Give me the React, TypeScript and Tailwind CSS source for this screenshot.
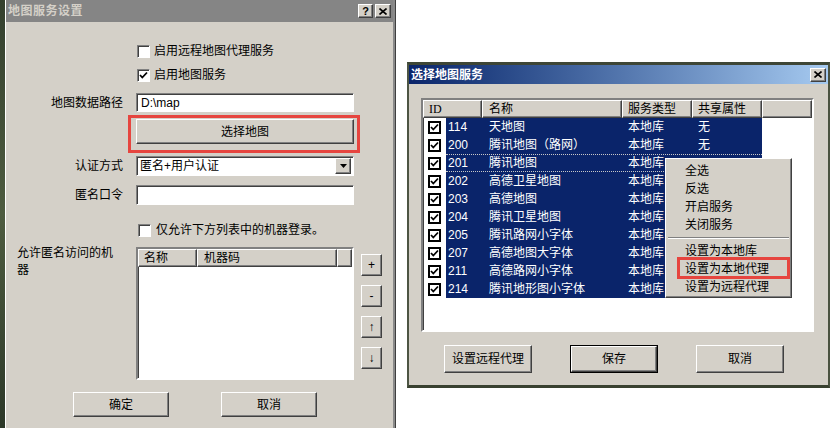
import React from "react";

// classic win2k bevels
const raised =
  "border border-t-white border-l-white border-r-[#404040] border-b-[#404040] shadow-[inset_-1px_-1px_0_#808080]";
const sunken =
  "border border-t-[#808080] border-l-[#808080] border-r-white border-b-white shadow-[inset_1px_1px_0_#404040]";

const rows = [
  ["114", "天地图", "本地库", "无"],
  ["200", "腾讯地图（路网）", "本地库", "无"],
  ["201", "腾讯地图", "本地库", ""],
  ["202", "高德卫星地图", "本地库", ""],
  ["203", "高德地图", "本地库", ""],
  ["204", "腾讯卫星地图", "本地库", ""],
  ["205", "腾讯路网小字体", "本地库", ""],
  ["207", "高德地图大字体", "本地库", ""],
  ["211", "高德路网小字体", "本地库", ""],
  ["214", "腾讯地形图小字体", "本地库", ""],
];

function Tick() {
  return (
    <svg width="9" height="9" viewBox="0 0 9 9">
      <polyline points="1,4 3.3,6.5 8,1.5" fill="none" stroke="#000" strokeWidth="1.8" />
    </svg>
  );
}

function CheckBox({ checked }: { checked?: boolean }) {
  return (
    <span className={`w-[13px] h-[13px] shrink-0 bg-white flex items-center justify-center ${sunken}`}>
      {checked && <Tick />}
    </span>
  );
}

function CloseGlyph() {
  return (
    <svg width="8" height="7" viewBox="0 0 8 7">
      <path d="M0.5 0.5 L7.5 6.5 M7.5 0.5 L0.5 6.5" stroke="#000" strokeWidth="1.6" />
    </svg>
  );
}

function Btn({ label, className = "" }: { label: string; className?: string }) {
  return (
    <div className={`bg-[#d4d0c8] flex items-center justify-center ${raised} ${className}`}>{label}</div>
  );
}

function LeftDialog() {
  return (
    <div className="w-[391px] h-full shrink-0 bg-[#d4d0c8] border-l border-l-white border-r border-r-[#404040] shadow-[inset_-2px_0_0_#8a8a8a] flex flex-col">
      {/* Title (inactive) */}
      <div className="h-[22px] mr-[2px] bg-[#858585] flex items-center pl-[2px] pr-[2px]">
        <span className="font-bold text-[#d4d0c8] tracking-[0.5px]">地图服务设置</span>
        <div className="ml-auto flex gap-[2px]">
          <div className={`w-[15px] h-[14px] bg-[#d4d0c8] flex items-center justify-center text-[11px] font-bold leading-none ${raised}`}>?</div>
          <div className={`w-[16px] h-[14px] bg-[#d4d0c8] flex items-center justify-center ${raised}`}>
            <CloseGlyph />
          </div>
        </div>
      </div>

      <div className="h-[16px] mt-[21px] pl-[131px] flex items-center gap-[4px]">
        <CheckBox />
        <span>启用远程地图代理服务</span>
      </div>
      <div className="h-[16px] mt-[8px] pl-[131px] flex items-center gap-[4px]">
        <CheckBox checked />
        <span>启用地图服务</span>
      </div>

      <div className="mt-[10px] flex items-center gap-[13px]">
        <span className="w-[117px] text-right">地图数据路径</span>
        <div className={`w-[218px] h-[19px] bg-white flex items-center pl-[4px] ${sunken}`}>D:\map</div>
      </div>

      <div className="mt-[7px] ml-[130px] relative w-[218px]">
        <Btn label="选择地图" className="w-[218px] h-[25px]" />
        <div className="absolute -top-[4px] -bottom-[9px] -left-[8px] -right-[6px] border-[3px] border-[#e6453f]" />
      </div>

      <div className="mt-[12px] flex items-center gap-[13px]">
        <span className="w-[117px] text-right">认证方式</span>
        <div className={`w-[218px] h-[20px] bg-white flex items-center pl-[3px] pr-[2px] ${sunken}`}>
          <span>匿名+用户认证</span>
          <div className={`ml-auto w-[16px] h-[16px] bg-[#d4d0c8] flex items-center justify-center ${raised}`}>
            <svg width="7" height="4" viewBox="0 0 7 4">
              <path d="M0 0 H7 L3.5 4 Z" fill="#000" />
            </svg>
          </div>
        </div>
      </div>

      <div className="mt-[9px] flex items-center gap-[13px]">
        <span className="w-[117px] text-right">匿名口令</span>
        <div className={`w-[218px] h-[20px] bg-white ${sunken}`} />
      </div>

      <div className="h-[16px] mt-[17px] pl-[132px] flex items-center gap-[5px]">
        <CheckBox />
        <span>仅允许下方列表中的机器登录。</span>
      </div>

      <div className="mt-[9px] flex">
        <div className="w-[130px] pl-[11px] -mt-[2px]">
          <div className="w-[100px] leading-[17px]">允许匿名访问的机器</div>
        </div>
        <div className={`w-[218px] h-[133px] bg-white flex flex-col ${sunken} border-[2px]`}>
          <div className="flex h-[18px] shrink-0">
            <div className={`w-[59px] bg-[#d4d0c8] pl-[5px] flex items-center ${raised}`}>名称</div>
            <div className={`w-[140px] bg-[#d4d0c8] pl-[6px] flex items-center ${raised}`}>机器码</div>
            <div className={`flex-1 bg-[#d4d0c8] ${raised}`} />
          </div>
        </div>
        <div className="ml-[7px] pt-[7px] flex flex-col gap-[9px]">
          {["+", "-", "↑", "↓"].map((s) => (
            <div key={s} className={`w-[21px] h-[22px] bg-[#d4d0c8] flex items-center justify-center text-[12px] ${raised}`}>
              {s}
            </div>
          ))}
        </div>
      </div>

      <div className="mt-[12px] pl-[67px] flex gap-[52px]">
        <Btn label="确定" className="w-[96px] h-[25px]" />
        <Btn label="取消" className="w-[96px] h-[25px]" />
      </div>
    </div>
  );
}

const menuItems = ["全选", "反选", "开启服务", "关闭服务"];
const menuItems2 = ["设置为本地库", "设置为本地代理", "设置为远程代理"];

function ContextMenu() {
  return (
    <div className={`absolute left-[242px] top-[58px] w-[127px] h-[140px] bg-[#d4d0c8] pt-[3px] ${raised}`}>
      {menuItems.map((m) => (
        <div key={m} className="h-[18px] pl-[19px] flex items-center">{m}</div>
      ))}
      <div className="h-[8px] flex items-center px-[2px]">
        <div className="w-full h-[2px] border-t border-t-[#808080] border-b border-b-white" />
      </div>
      {menuItems2.map((m, i) => (
        <div key={m} className="h-[18px] pl-[19px] flex items-center relative">
          {m}
          {i === 1 && (
            <div className="absolute -top-[3px] -bottom-[1px] left-[11px] right-[1px] border-[3px] border-[#e6453f]" />
          )}
        </div>
      ))}
    </div>
  );
}

function RightDialog() {
  return (
    <div className="w-[423px] h-[326px] border-t-[3px] border-t-[#3e4636] border-b-[3px] border-b-[#394130] border-l-2 border-l-[#4d5544] border-r-2 border-r-[#4a5240] bg-[#d4d0c8] flex flex-col">
      <div className="h-[19px] bg-gradient-to-r from-[#0a246a] to-[#a6caf0] flex items-center pl-[2px] pr-[2px]">
        <span className="font-bold text-white">选择地图服务</span>
        <div className={`ml-auto w-[16px] h-[14px] bg-[#d4d0c8] flex items-center justify-center ${raised}`}>
          <CloseGlyph />
        </div>
      </div>

      <div className={`relative mt-[14px] ml-[12px] w-[393px] h-[234px] bg-white flex flex-col border-[2px] ${sunken}`}>
        <div className="flex h-[18px] shrink-0">
          <div className={`w-[59px] bg-[#d4d0c8] pl-[5px] flex items-center [font-family:'Liberation_Serif',serif] ${raised}`}>ID</div>
          <div className={`w-[140px] bg-[#d4d0c8] pl-[6px] flex items-center ${raised}`}>名称</div>
          <div className={`w-[70px] bg-[#d4d0c8] pl-[5px] flex items-center ${raised}`}>服务类型</div>
          <div className={`w-[70px] bg-[#d4d0c8] pl-[5px] flex items-center ${raised}`}>共享属性</div>
          <div className={`flex-1 bg-[#d4d0c8] ${raised}`} />
        </div>
        {rows.map(([id, name, type, share]) => (
          <div key={id} className="h-[18px] flex items-center">
            <span className="ml-[5px] w-[13px] h-[13px] bg-white border-2 border-black flex items-center justify-center">
              <Tick />
            </span>
            <div
              className={`ml-[5px] w-[316px] h-[18px] flex items-center bg-[#0a246a] text-white ${
                id === "201" ? "border-y border-dotted border-[#c8c8c8]" : ""
              }`}
            >
              <span className="w-[36px] pl-[2px]">{id}</span>
              <span className="w-[140px] pl-[7px]">{name}</span>
              <span className="w-[70px] pl-[6px]">{type}</span>
              <span className="w-[70px] pl-[6px]">{share}</span>
            </div>
          </div>
        ))}
        <ContextMenu />
      </div>

      <div className="mt-[13px] ml-[35px] flex gap-[38px]">
        <Btn label="设置远程代理" className="w-[88px] h-[28px]" />
        <div className="w-[88px] h-[28px] border border-black">
          <Btn label="保存" className="w-full h-full" />
        </div>
        <Btn label="取消" className="w-[88px] h-[28px]" />
      </div>
    </div>
  );
}

export default function App() {
  return (
    <div className="w-[831px] h-[428px] flex overflow-hidden bg-white text-[12px] leading-none text-black [font-family:'Liberation_Sans','Noto_Sans_CJK_SC',sans-serif]">
      <div className="w-[5px] h-full shrink-0 bg-gradient-to-b from-[#34402e] via-[#4e5c40] to-[#2c3828]" />
      <LeftDialog />
      <div className="flex-1 pt-[62px] pl-[11px]">
        <RightDialog />
      </div>
    </div>
  );
}
